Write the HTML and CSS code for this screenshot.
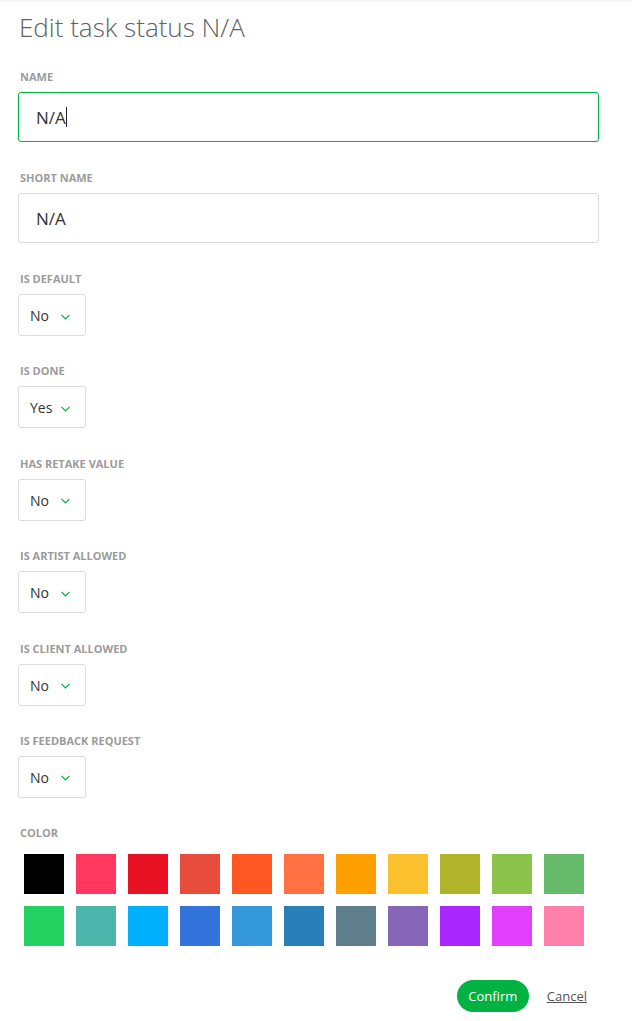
FILE: index.html
```html
<!DOCTYPE html>
<html lang="en">
<head>
<meta charset="utf-8">
<title>Edit task status N/A</title>
<link rel="stylesheet" href="styles.css">
</head>
<body>
<div class="modal">
  <h1 class="title">Edit task status N/A</h1>

  <div class="field">
    <label class="label">Name</label>
    <div class="input focused"><span>N/A</span><span class="caret"></span></div>
  </div>

  <div class="field">
    <label class="label">Short name</label>
    <div class="input"><span>N/A</span></div>
  </div>

  <div class="field sel-field">
    <label class="label">Is default</label>
    <div class="select"><span>No</span><svg class="chev" width="9" height="6" viewBox="0 0 9 6"><polyline points="0.5,0.8 4.5,4.8 8.5,0.8" /></svg></div>
  </div>

  <div class="field sel-field">
    <label class="label">Is done</label>
    <div class="select"><span>Yes</span><svg class="chev" width="9" height="6" viewBox="0 0 9 6"><polyline points="0.5,0.8 4.5,4.8 8.5,0.8" /></svg></div>
  </div>

  <div class="field sel-field">
    <label class="label">Has retake value</label>
    <div class="select"><span>No</span><svg class="chev" width="9" height="6" viewBox="0 0 9 6"><polyline points="0.5,0.8 4.5,4.8 8.5,0.8" /></svg></div>
  </div>

  <div class="field sel-field">
    <label class="label">Is artist allowed</label>
    <div class="select"><span>No</span><svg class="chev" width="9" height="6" viewBox="0 0 9 6"><polyline points="0.5,0.8 4.5,4.8 8.5,0.8" /></svg></div>
  </div>

  <div class="field sel-field">
    <label class="label">Is client allowed</label>
    <div class="select"><span>No</span><svg class="chev" width="9" height="6" viewBox="0 0 9 6"><polyline points="0.5,0.8 4.5,4.8 8.5,0.8" /></svg></div>
  </div>

  <div class="field sel-field">
    <label class="label">Is feedback request</label>
    <div class="select"><span>No</span><svg class="chev" width="9" height="6" viewBox="0 0 9 6"><polyline points="0.5,0.8 4.5,4.8 8.5,0.8" /></svg></div>
  </div>

  <div class="field color-field">
    <label class="label">Color</label>
    <div class="swatches">
      <span class="swatch c1"></span><span class="swatch c2"></span><span class="swatch c3"></span><span class="swatch c4"></span><span class="swatch c5"></span><span class="swatch c6"></span><span class="swatch c7"></span><span class="swatch c8"></span><span class="swatch c9"></span><span class="swatch c10"></span><span class="swatch c11"></span>
      <span class="swatch c12"></span><span class="swatch c13"></span><span class="swatch c14"></span><span class="swatch c15"></span><span class="swatch c16"></span><span class="swatch c17"></span><span class="swatch c18"></span><span class="swatch c19"></span><span class="swatch c20"></span><span class="swatch c21"></span><span class="swatch c22"></span>
    </div>
  </div>

  <div class="actions">
    <button class="confirm">Confirm</button>
    <a class="cancel" href="#">Cancel</a>
  </div>
</div>
</body>
</html>
```

FILE: styles.css
```css
html, body {
  margin: 0;
  padding: 0;
  background: #ffffff;
}

body {
  font-family: "Open Sans", "Liberation Sans", sans-serif;
  color: #333333;
  border-top: 2px solid #f4f4f4;
}

.modal {
  width: 581px;
  padding: 0 0 0 18px;
}

.title {
  margin: 7px 0 0 1px;
  font-size: 26px;
  font-weight: 300;
  line-height: 36px;
  color: #5f5f66;
}

.field {
  display: flex;
  flex-direction: column;
  align-items: flex-start;
  margin-top: 25px;
}

.field + .field {
  margin-top: 29px;
}

.field.sel-field + .field {
  margin-top: 28.4px;
}

.label {
  display: block;
  font-size: 11px;
  font-weight: 700;
  line-height: 14px;
  text-transform: uppercase;
  color: #9b9b9b;
  margin: 0 0 8px 2px;
}

.input {
  box-sizing: border-box;
  width: 581px;
  height: 50px;
  border: 1px solid #dcdcdc;
  border-radius: 3px;
  padding: 0 17px;
  display: flex;
  align-items: center;
  font-size: 17px;
  color: #333333;
}

.input.focused {
  border-color: #00b242;
}

.caret {
  display: inline-block;
  width: 1px;
  height: 20px;
  background: #222222;
  margin-left: 0;
}

.select {
  box-sizing: border-box;
  width: 68px;
  height: 42px;
  border: 1px solid #dcdcdc;
  border-radius: 3px;
  padding: 1px 0 0 11px;
  display: flex;
  align-items: center;
  font-size: 14px;
  color: #333333;
}

.select span {
  width: 31px;
}

.chev {
  display: block;
  margin-top: 2px;
}

.chev polyline {
  fill: none;
  stroke: #00b242;
  stroke-width: 1.2;
}

.swatches {
  display: grid;
  grid-template-columns: repeat(11, 40px);
  grid-auto-rows: 40px;
  gap: 12px;
  padding: 6px;
}

.swatch {
  display: block;
}

.c1 { background: #000000; }
.c2 { background: #ff3860; }
.c3 { background: #e81123; }
.c4 { background: #e74c3c; }
.c5 { background: #ff5722; }
.c6 { background: #ff7043; }
.c7 { background: #ffa000; }
.c8 { background: #fbc02d; }
.c9 { background: #afb42b; }
.c10 { background: #8bc34a; }
.c11 { background: #66bb6a; }
.c12 { background: #22d160; }
.c13 { background: #4db6ac; }
.c14 { background: #00b0ff; }
.c15 { background: #3273dc; }
.c16 { background: #3498db; }
.c17 { background: #2980b9; }
.c18 { background: #607d8b; }
.c19 { background: #8766b8; }
.c20 { background: #aa26ff; }
.c21 { background: #e040fb; }
.c22 { background: #ff80ab; }

.actions {
  display: flex;
  justify-content: flex-end;
  align-items: center;
  margin-top: 28px;
  padding-right: 12px;
}

.confirm {
  height: 32px;
  width: 72px;
  border: none;
  border-radius: 16px;
  background: #00b242;
  color: #ffffff;
  font-family: "Open Sans", "Liberation Sans", sans-serif;
  font-size: 13px;
  padding: 0;
}

.cancel {
  margin-left: 18px;
  font-size: 13px;
  color: #555555;
  text-decoration: underline;
}
```
